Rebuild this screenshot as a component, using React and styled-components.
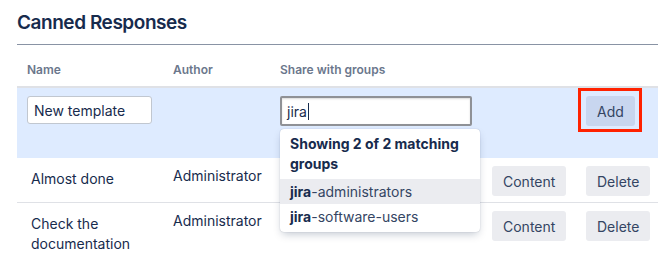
import styled, { createGlobalStyle } from 'styled-components';

const GlobalStyle = createGlobalStyle`
  body {
    margin: 0;
    background: #FFFFFF;
    font-family: Inter, 'Noto Sans', sans-serif;
    color: #172B4D;
  }
`;

const rows = [
  { name: 'Almost done', author: 'Administrator' },
  { name: 'Check the documentation', author: 'Administrator' },
];

const groups = ['administrators', 'software-users'];

function App() {
  return (
    <>
      <GlobalStyle />
      <Page>
        <Title>Canned Responses</Title>

        <HeadRow>
          <HeadCell>Name</HeadCell>
          <HeadCell>Author</HeadCell>
          <HeadCell>Share with groups</HeadCell>
          <HeadCell />
          <HeadCell />
        </HeadRow>

        <AddRow>
          <Cell>
            <NameInput readOnly defaultValue='New template' />
          </Cell>
          <Cell />
          <Cell>
            <Combo>
              <FocusInput>
                jira<Caret />
              </FocusInput>
              <Dropdown>
                <DropdownHead>Showing 2 of 2 matching groups</DropdownHead>
                {groups.map((g, i) => (
                  <Option key={g} $active={i === 0}>
                    <b>jira</b>-{g}
                  </Option>
                ))}
              </Dropdown>
            </Combo>
          </Cell>
          <Cell />
          <Cell>
            <Marked>
              <Button $tone='blue'>Add</Button>
            </Marked>
          </Cell>
        </AddRow>

        {rows.map((r, i) => (
          <BodyRow key={r.name} $last={i === rows.length - 1}>
            <NameText>{r.name}</NameText>
            <AuthorText>{r.author}</AuthorText>
            <Cell />
            <Cell>
              <Button>Content</Button>
            </Cell>
            <Cell>
              <Button>Delete</Button>
            </Cell>
          </BodyRow>
        ))}
      </Page>
    </>
  );
}

export default App;

const Page = styled.div`
  padding-left: 17px;
`;

const Title = styled.h2`
  margin: 0;
  padding: 11px 0 9px;
  font-size: 19px;
  line-height: 24px;
  font-weight: 600;
  letter-spacing: -0.45px;
  color: #172B4D;
  border-bottom: 1px solid #8993A4;
`;

const grid = `
  display: grid;
  grid-template-columns: 146px 107px 212px 94px 1fr;
`;

const HeadRow = styled.div`
  ${grid}
  height: 43px;
  padding-top: 17px;
  box-sizing: border-box;
  border-bottom: 2px solid #DFE1E6;
`;

const HeadCell = styled.div`
  padding: 0 10px;
  font-size: 12px;
  line-height: 16px;
  font-weight: 600;
  color: #6B778C;
`;

const AddRow = styled.div`
  ${grid}
  height: 70px;
  box-sizing: border-box;
  padding-top: 8px;
  background: #DEEBFF;
  align-items: start;
`;

const BodyRow = styled.div`
  ${grid}
  align-items: start;
  padding: 8px 0 ${(p) => (p.$last ? '8px' : '6px')};
  border-bottom: ${(p) => (p.$last ? 'none' : '1px solid #DFE1E6')};
`;

const Cell = styled.div`
  padding-left: 10px;
`;

const NameText = styled.div`
  padding: 3px 10px 0 14px;
  font-size: 14px;
  line-height: 20px;
  color: #172B4D;
`;

const AuthorText = styled.div`
  padding-left: 10px;
  font-size: 14px;
  line-height: 20px;
  color: #172B4D;
`;

const NameInput = styled.input`
  width: 125px;
  height: 28px;
  box-sizing: border-box;
  padding: 0 6px;
  border: 1px solid #C1C7D0;
  border-radius: 3px;
  background: #FFFFFF;
  font-family: Inter, 'Noto Sans', sans-serif;
  font-size: 14px;
  color: #172B4D;
  outline: none;
`;

const Combo = styled.div`
  position: relative;
  width: 192px;
`;

const FocusInput = styled.div`
  height: 30px;
  box-sizing: border-box;
  padding: 0 5px;
  display: flex;
  align-items: center;
  border: 2px solid #8F9196;
  border-radius: 2px;
  background: #FFFFFF;
  box-shadow: inset 0 1px 2px rgba(0, 0, 0, 0.15);
  font-size: 14px;
  color: #172B4D;
`;

const Caret = styled.span`
  display: inline-block;
  width: 1px;
  height: 17px;
  margin-left: 1px;
  background: #172B4D;
`;

const Dropdown = styled.div`
  position: absolute;
  top: 33px;
  left: 0;
  width: 200px;
  padding: 5px 0 3px;
  background: #FFFFFF;
  border-radius: 4px;
  box-shadow: 0 4px 8px -2px rgba(9, 30, 66, 0.25), 0 0 1px rgba(9, 30, 66, 0.31);
  z-index: 2;
`;

const DropdownHead = styled.div`
  padding: 0 10px 5px;
  font-size: 14px;
  line-height: 20px;
  font-weight: 700;
  color: #172B4D;
`;

const Option = styled.div`
  height: 25px;
  padding: 0 10px;
  display: flex;
  align-items: center;
  font-size: 14px;
  color: #344563;
  background: ${(p) => (p.$active ? '#EBECF0' : 'transparent')};

  b {
    font-weight: 700;
    color: #172B4D;
  }
`;

const Marked = styled.div`
  position: relative;
  display: inline-block;

  &::after {
    content: '';
    position: absolute;
    top: -8px;
    left: -8px;
    right: -7px;
    bottom: -6px;
    border: 3px solid #FF2200;
  }
`;

const Button = styled.button`
  height: 30px;
  padding: 0 11px;
  border: none;
  border-radius: 3px;
  background: ${(p) => (p.$tone === 'blue' ? '#C8D6EF' : '#EBECF0')};
  font-family: Inter, 'Noto Sans', sans-serif;
  font-size: 14px;
  color: #344563;
  cursor: pointer;
`;
